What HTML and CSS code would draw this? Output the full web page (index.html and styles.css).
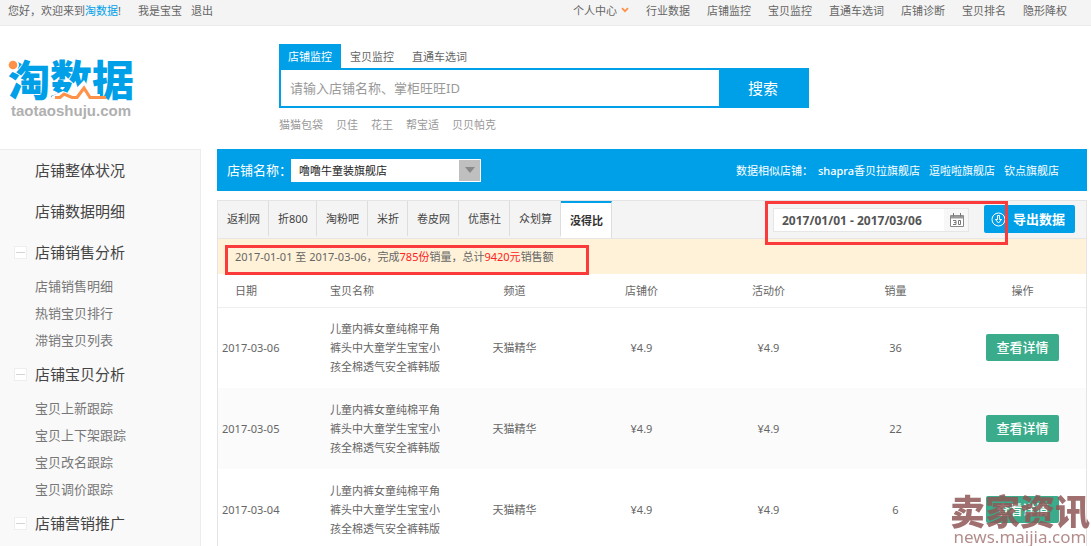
FILE: index.html
```html
<!DOCTYPE html>
<html lang="zh-CN">
<head>
<meta charset="utf-8">
<meta name="viewport" content="width=device-width, initial-scale=1">
<title>淘数据</title>
<link rel="stylesheet" href="styles.css">
</head>
<body>
<div class="topbar">
  <div class="welcome">
    <span>您好，欢迎来到<a class="brand-link" href="#">淘数据</a>!</span>
    <a class="user" href="#">我是宝宝</a>
    <a href="#">退出</a>
  </div>
  <nav class="topnav">
    <a class="has-arrow" href="#">个人中心<svg width="8" height="6" viewBox="0 0 8 6"><path d="M1 1.2 4 4.2 7 1.2" fill="none" stroke="#ff9248" stroke-width="1.8"/></svg></a>
    <a href="#">行业数据</a>
    <a href="#">店铺监控</a>
    <a href="#">宝贝监控</a>
    <a href="#">直通车选词</a>
    <a href="#">店铺诊断</a>
    <a href="#">宝贝排名</a>
    <a href="#">隐形降权</a>
  </nav>
</div>

<header class="header">
  <a class="logo" href="#">
    <span class="logo-name">淘数据</span>
    <svg class="logo-accent" width="128" height="44" viewBox="0 0 128 44">
      <circle cx="5" cy="6" r="6" fill="#fff"/>
      <circle cx="5" cy="6" r="4.300" fill="#ff9248"/>
      <path d="M44 43V37l11-5 8 3 13-14 9 14h7v8z" fill="#fff"/>
      <path d="M47 38.500h5L56 35l8 3.500h5L76 29l6 9.500h16" fill="none" stroke="#ff9248" stroke-width="3.200"/>
    </svg>
    <span class="logo-domain">taotaoshuju.com</span>
  </a>
  <form class="search" onsubmit="return false">
    <div class="search-tabs">
      <button type="button" class="search-tab active">店铺监控</button>
      <button type="button" class="search-tab">宝贝监控</button>
      <button type="button" class="search-tab">直通车选词</button>
    </div>
    <div class="search-row">
      <input class="search-input" type="text" aria-label="搜索" placeholder="请输入店铺名称、掌柜旺旺ID">
      <button class="search-button">搜索</button>
    </div>
    <div class="hot-words">
      <a href="#">猫猫包袋</a><a href="#">贝佳</a><a href="#">花王</a><a href="#">帮宝适</a><a href="#">贝贝帕克</a>
    </div>
  </form>
</header>

<div class="content">
  <aside class="sidebar">
    <a class="group" href="#">店铺整体状况</a>
    <a class="group" href="#">店铺数据明细</a>
    <a class="group" href="#"><i class="toggle"></i>店铺销售分析</a>
    <a class="item" href="#">店铺销售明细</a>
    <a class="item" href="#">热销宝贝排行</a>
    <a class="item" href="#">滞销宝贝列表</a>
    <a class="group" href="#"><i class="toggle"></i>店铺宝贝分析</a>
    <a class="item" href="#">宝贝上新跟踪</a>
    <a class="item" href="#">宝贝上下架跟踪</a>
    <a class="item" href="#">宝贝改名跟踪</a>
    <a class="item" href="#">宝贝调价跟踪</a>
    <a class="group" href="#"><i class="toggle"></i>店铺营销推广</a>
  </aside>

  <main class="main">
    <div class="shopbar">
      <label for="shop">店铺名称：</label>
      <div class="select">
        <select id="shop"><option>噜噜牛童装旗舰店</option></select>
        <span class="select-arrow"><svg width="10" height="6" viewBox="0 0 10 6"><path d="M0 0h10L5 6z" fill="#888"/></svg></span>
      </div>
      <div class="similar">
        <span class="similar-label">数据相似店铺：</span>
        <a href="#"><b>shapra</b>香贝拉旗舰店</a>
        <a href="#">逗啦啦旗舰店</a>
        <a href="#">钦点旗舰店</a>
      </div>
    </div>

    <section class="panel">
      <div class="toolbar">
        <div class="tabs">
          <button class="tab">返利网</button>
          <button class="tab">折800</button>
          <button class="tab">淘粉吧</button>
          <button class="tab">米折</button>
          <button class="tab">卷皮网</button>
          <button class="tab">优惠社</button>
          <button class="tab">众划算</button>
          <button class="tab active">没得比</button>
        </div>
        <div class="range">
          <input type="text" aria-label="日期范围" value="2017/01/01 - 2017/03/06">
          <svg class="calendar" width="14" height="14" viewBox="0 0 14 14">
            <path d="M.5 2.500h13v11H.5z" fill="#fff" stroke="#888"/>
            <path d="M1 2.500h12v3H1z" fill="#999"/>
            <path d="M3.500 0v3.500M10.500 0v3.500" stroke="#777"/>
            <path d="M3 7.500h3v4H3M4 9.500h2M8.500 7.500h2v4h-2z" fill="none" stroke="#777"/>
          </svg>
          <span class="mark mark-range"></span>
        </div>
        <button class="export">
          <svg width="15" height="15" viewBox="0 0 15 15" fill="none" stroke="#fff">
            <circle cx="7.500" cy="7.500" r="6.500"/>
            <path d="M6.500 3.500h2v4h2l-3 3.500-3-3.500h2z"/>
          </svg>
          导出数据
        </button>
      </div>

      <div class="notice">
        2017-01-01 至 2017-03-06，完成<em>785份</em>销量，总计<em>9420元</em>销售额
        <span class="mark mark-notice"></span>
      </div>

      <table class="sales">
        <colgroup><col class="col-date"><col class="col-name"><col><col><col><col><col></colgroup>
        <thead>
          <tr><th class="date">日期</th><th class="name">宝贝名称</th><th>频道</th><th>店铺价</th><th>活动价</th><th>销量</th><th>操作</th></tr>
        </thead>
        <tbody>
          <tr><td class="date">2017-03-06</td><td class="name">儿童内裤女童纯棉平角裤头中大童学生宝宝小孩全棉透气安全裤韩版</td><td>天猫精华</td><td>¥4.9</td><td>¥4.9</td><td>36</td><td><button class="detail">查看详情</button></td></tr>
          <tr><td class="date">2017-03-05</td><td class="name">儿童内裤女童纯棉平角裤头中大童学生宝宝小孩全棉透气安全裤韩版</td><td>天猫精华</td><td>¥4.9</td><td>¥4.9</td><td>22</td><td><button class="detail">查看详情</button></td></tr>
          <tr><td class="date">2017-03-04</td><td class="name">儿童内裤女童纯棉平角裤头中大童学生宝宝小孩全棉透气安全裤韩版</td><td>天猫精华</td><td>¥4.9</td><td>¥4.9</td><td>6</td><td><button class="detail">查看详情</button></td></tr>
        </tbody>
      </table>
    </section>
  </main>
</div>

<div class="watermark">
  <span class="watermark-name">卖家资讯</span>
  <span class="watermark-url">news.maijia.com</span>
</div>
</body>
</html>
```
FILE: styles.css
```css
* {
  box-sizing: border-box;
}

body {
  display: flex;
  flex-direction: column;
  height: 100vh;
  margin: 0;
  overflow: hidden;
  background: #fff;
  color: #666;
  font: 11px/19px "Noto Sans", "Noto Sans CJK SC", sans-serif;
}

a {
  color: inherit;
  text-decoration: none;
}

button,
input,
select {
  margin: 0;
  padding: 0;
  border: 0;
  border-radius: 0;
  font: inherit;
  color: inherit;
}

button {
  background: none;
  cursor: pointer;
}

/* Top bar */
.topbar {
  display: flex;
  flex: none;
  justify-content: space-between;
  height: 26px;
  padding: 1px 24px 0 8px;
  border-bottom: 1px solid #ececec;
  background: #f4f4f4;
  white-space: nowrap;
}

.welcome {
  display: flex;
  gap: 9px;
}

.brand-link {
  color: #00a0e9;
}

.user {
  margin-left: 8px;
}

.topnav {
  display: flex;
  gap: 17px;
}

.has-arrow svg {
  margin-left: 4px;
  vertical-align: 2px;
}

/* Header */
.header {
  display: flex;
  flex: none;
  height: 123px;
  padding: 18px 8px 0;
}

.logo {
  display: flex;
  flex: none;
  flex-direction: column;
  position: relative;
  width: 271px;
  padding-top: 14px;
}

.logo-name {
  color: #00a0e9;
  font-size: 42px;
  font-weight: 900;
  line-height: 44px;
}

.logo-accent {
  position: absolute;
  top: 15px;
  left: 0;
}

.logo-domain {
  padding-left: 3px;
  color: #b0b0b0;
  font: bold 15px/18px "Liberation Sans", Arial, sans-serif;
}

.search {
  flex: 1;
  max-width: 530px;
}

.search-tabs {
  display: flex;
  height: 24px;
}

.search-tab {
  padding: 0 9px;
}

.search-tab.active {
  background: #00a0e9;
  color: #fff;
}

.search-row {
  display: flex;
  height: 40px;
  border: 2px solid #00a0e9;
}

.search-input {
  flex: 1;
  min-width: 0;
  padding: 0 9px;
  background: #fff;
  font-size: 13px;
  outline: 0;
}

.search-input::placeholder {
  color: #999;
  opacity: 1;
}

.search-button {
  width: 88px;
  background: #00a0e9;
  color: #fff;
  font-size: 15px;
}

.hot-words {
  display: flex;
  gap: 13px;
  padding-top: 7px;
  color: #999;
}

/* Page columns */
.content {
  display: flex;
  flex: 1;
  min-height: 0;
  gap: 16px;
  padding-right: 4px;
}

.sidebar {
  display: flex;
  flex: none;
  flex-direction: column;
  width: 201px;
  border: 1px solid #ececec;
  border-bottom: 0;
  border-left: 0;
  background: #f9f9f9;
  overflow: hidden;
}

.group {
  flex: none;
  position: relative;
  padding-left: 35px;
  color: #444;
  font-size: 15px;
  line-height: 41px;
}

.item {
  flex: none;
  padding-left: 35px;
  color: #777;
  font-size: 13px;
  line-height: 27px;
}

.toggle {
  position: absolute;
  top: 14px;
  left: 14px;
  width: 13px;
  height: 13px;
  border: 1px solid #eee;
  background: linear-gradient(#d4d4d4, #d4d4d4) center / 9px 1px no-repeat #fff;
}

.main {
  flex: 1;
  min-width: 0;
}

/* Shop selector */
.shopbar {
  display: flex;
  align-items: center;
  height: 42px;
  margin-bottom: 9px;
  padding: 0 28px 0 10px;
  background: #00a0e9;
  color: #fff;
  white-space: nowrap;
}

.shopbar label {
  width: 64px;
  font-size: 13px;
}

.select {
  position: relative;
  width: 190px;
  height: 23px;
}

.select select {
  width: 100%;
  height: 100%;
  padding: 0 28px 0 8px;
  appearance: none;
  background: #fff;
  color: #222;
}

.select-arrow {
  display: grid;
  place-items: center;
  position: absolute;
  top: 1px;
  right: 1px;
  width: 21px;
  height: 21px;
  background: #bfbfbf;
  pointer-events: none;
}

.similar {
  display: flex;
  gap: 9px;
  margin-left: auto;
}

.similar-label {
  margin-right: -4px;
}

.similar b {
  font-weight: 500;
}

/* Sales panel */
.panel {
  border: 1px solid #e4e4e4;
}

.toolbar {
  display: flex;
  height: 38px;
  padding-right: 11px;
  border-bottom: 1px solid #e6e6e6;
  background: #f4f4f4;
}

.tabs {
  display: flex;
  margin-right: auto;
}

.tab {
  height: 35px;
  padding: 0 8px 0 9px;
  border-right: 1px solid #ddd;
  color: #444;
  white-space: nowrap;
}

.tab.active {
  height: 37px;
  border-top: 2px solid #00a0e9;
  background: #fff;
  color: #333;
  font-weight: bold;
}

.range {
  display: flex;
  align-items: center;
  position: relative;
  width: 196px;
  height: 24px;
  margin: 7px 15px 0 0;
  border: 1px solid #e6e6e6;
  background: #f7f7f7;
}

.range input {
  width: 170px;
  height: 22px;
  padding-left: 8px;
  background: #fff;
  color: #555;
  font-size: 12px;
  font-weight: bold;
}

.calendar {
  margin-left: 6px;
}

.export {
  display: flex;
  align-items: center;
  gap: 7px;
  height: 28px;
  margin-top: 4px;
  padding: 0 10px 0 7px;
  border-radius: 2px;
  background: #00a0e9;
  color: #fff;
  font-size: 13px;
  font-weight: bold;
  white-space: nowrap;
}

.mark {
  position: absolute;
  z-index: 1;
  border: 3px solid #fb3b3b;
  pointer-events: none;
}

.mark-range {
  top: -8px;
  right: -40px;
  bottom: -14px;
  left: -9px;
}

.notice {
  position: relative;
  height: 35px;
  padding-left: 17px;
  background: #fff2d9;
  line-height: 35px;
}

.notice em {
  color: #f22;
  font-style: normal;
}

.mark-notice {
  top: 6px;
  left: 7px;
  width: 364px;
  height: 30px;
}

.sales {
  width: 100%;
  border-collapse: collapse;
  table-layout: fixed;
}

.col-date {
  width: 112px;
}

.col-name {
  width: 121px;
}

.sales th {
  height: 33px;
  padding: 0;
  border-bottom: 1px solid #eee;
  font-weight: normal;
}

.sales td {
  height: 81px;
  padding: 0;
  text-align: center;
}

.sales tbody tr:nth-child(even) {
  background: #fbfbfb;
}

.sales .date,
.sales .name {
  text-align: left;
}

.sales td.date {
  padding-left: 4px;
}

.sales th.date {
  padding-left: 17px;
}

.sales td.name {
  padding-right: 9px;
}

.detail {
  height: 27px;
  padding: 0 10px;
  border-radius: 2px;
  background: #3bac8b;
  color: #fff;
  font-size: 13px;
  font-weight: 500;
}

/* Site watermark */
.watermark {
  display: flex;
  flex-direction: column;
  align-items: center;
  position: fixed;
  right: 1px;
  bottom: 0;
  z-index: 2;
  color: #8f5856;
  opacity: .85;
  pointer-events: none;
}

.watermark-name {
  font-size: 35px;
  font-weight: 900;
  line-height: 32px;
}

.watermark-url {
  font-size: 17px;
  line-height: 18px;
  opacity: .8;
}
```
